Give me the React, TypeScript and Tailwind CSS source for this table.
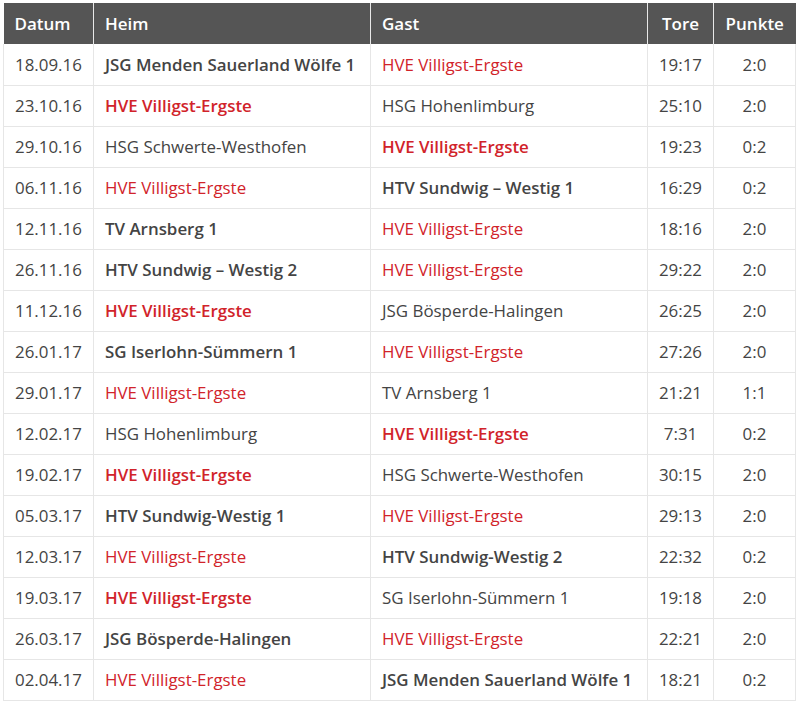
import React from 'react';

type Game = {
  datum: string;
  heim: string;
  gast: string;
  tore: string;
  punkte: string;
};

const HVE = 'HVE Villigst-Ergste';

const games: Game[] = [
  { datum: '18.09.16', heim: 'JSG Menden Sauerland Wölfe 1', gast: HVE, tore: '19:17', punkte: '2:0' },
  { datum: '23.10.16', heim: HVE, gast: 'HSG Hohenlimburg', tore: '25:10', punkte: '2:0' },
  { datum: '29.10.16', heim: 'HSG Schwerte-Westhofen', gast: HVE, tore: '19:23', punkte: '0:2' },
  { datum: '06.11.16', heim: HVE, gast: 'HTV Sundwig – Westig 1', tore: '16:29', punkte: '0:2' },
  { datum: '12.11.16', heim: 'TV Arnsberg 1', gast: HVE, tore: '18:16', punkte: '2:0' },
  { datum: '26.11.16', heim: 'HTV Sundwig – Westig 2', gast: HVE, tore: '29:22', punkte: '2:0' },
  { datum: '11.12.16', heim: HVE, gast: 'JSG Bösperde-Halingen', tore: '26:25', punkte: '2:0' },
  { datum: '26.01.17', heim: 'SG Iserlohn-Sümmern 1', gast: HVE, tore: '27:26', punkte: '2:0' },
  { datum: '29.01.17', heim: HVE, gast: 'TV Arnsberg 1', tore: '21:21', punkte: '1:1' },
  { datum: '12.02.17', heim: 'HSG Hohenlimburg', gast: HVE, tore: '7:31', punkte: '0:2' },
  { datum: '19.02.17', heim: HVE, gast: 'HSG Schwerte-Westhofen', tore: '30:15', punkte: '2:0' },
  { datum: '05.03.17', heim: 'HTV Sundwig-Westig 1', gast: HVE, tore: '29:13', punkte: '2:0' },
  { datum: '12.03.17', heim: HVE, gast: 'HTV Sundwig-Westig 2', tore: '22:32', punkte: '0:2' },
  { datum: '19.03.17', heim: HVE, gast: 'SG Iserlohn-Sümmern 1', tore: '19:18', punkte: '2:0' },
  { datum: '26.03.17', heim: 'JSG Bösperde-Halingen', gast: HVE, tore: '22:21', punkte: '2:0' },
  { datum: '02.04.17', heim: HVE, gast: 'JSG Menden Sauerland Wölfe 1', tore: '18:21', punkte: '0:2' },
];

// the winner of each game is printed bold, a draw leaves both normal
const Team: React.FC<{ name: string; winner: boolean }> = ({ name, winner }) => {
  const color = name === HVE ? 'text-[#d1232a]' : 'text-[#444444]';
  return <span className={`${color} ${winner ? 'font-semibold' : 'font-normal'}`}>{name}</span>;
};

const App: React.FC = () => {
  return (
    <div className="min-h-screen bg-white p-[3px] font-['Open_Sans',sans-serif] text-[16.9px] text-[#444444]">
      <table className="w-[792px] table-fixed border-collapse">
        <colgroup>
          <col className="w-[90px]" />
          <col className="w-[277px]" />
          <col className="w-[277px]" />
          <col className="w-[66px]" />
          <col className="w-[82px]" />
        </colgroup>
        <thead>
          <tr className="h-[41px] bg-[#555555] text-[17px] font-semibold text-white">
            <th className="border-r border-[#e8e8e8] pl-[11px] pt-[1px] text-left font-semibold">Datum</th>
            <th className="border-r border-[#e8e8e8] pl-[11px] pt-[1px] text-left font-semibold">Heim</th>
            <th className="border-r border-[#e8e8e8] pl-[11px] pt-[1px] text-left font-semibold">Gast</th>
            <th className="border-r border-[#e8e8e8] px-2 pt-[1px] text-center font-semibold">Tore</th>
            <th className="px-1 pt-[1px] text-center font-semibold">Punkte</th>
          </tr>
        </thead>
        <tbody>
          {games.map((g) => {
            const [h, a] = g.tore.split(':').map(Number);
            return (
              <tr key={g.datum} className="h-[41px] border-b border-[#e6e6e6]">
                <td className="border-x border-[#e6e6e6] pl-[11px] pt-[1px]">{g.datum}</td>
                <td className="border-r border-[#e6e6e6] pl-[11px] pt-[1px] whitespace-nowrap">
                  <Team name={g.heim} winner={h > a} />
                </td>
                <td className="border-r border-[#e6e6e6] pl-[11px] pt-[1px] whitespace-nowrap">
                  <Team name={g.gast} winner={a > h} />
                </td>
                <td className="border-r border-[#e6e6e6] pt-[1px] text-center">{g.tore}</td>
                <td className="border-r border-[#e6e6e6] pt-[1px] text-center">{g.punkte}</td>
              </tr>
            );
          })}
        </tbody>
      </table>
    </div>
  );
};

export default App;
